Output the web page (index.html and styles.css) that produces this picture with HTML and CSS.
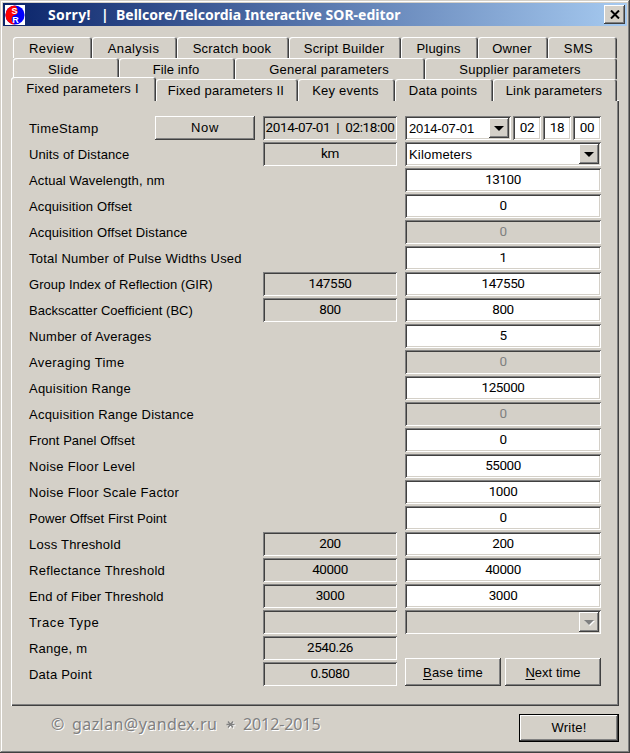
FILE: index.html
```
<!DOCTYPE html>
<html lang="en">
<head>
<meta charset="utf-8">
<title>Sorry! | Bellcore/Telcordia Interactive SOR-editor</title>
<link rel="stylesheet" href="styles.css">
</head>
<body>
<div class="window">
  <header class="titlebar">
    <svg class="app-icon" width="20" height="20" viewBox="0 0 20 20">
      <rect width="20" height="20" fill="#fff"/>
      <circle cx="10" cy="10" r="9.6" fill="#00f"/>
      <path d="M10 .4A9.6 9.6 0 0 0 10 19.6C5.500 16 6 11 10 10S13 3 10 .4Z" fill="#f00"/>
      <text x="9.500" y="8.500" class="icon-letter">S</text>
      <text x="10.500" y="18" class="icon-letter">R</text>
    </svg>
    <h1 class="title"><span class="app">Sorry!</span><span class="bar">|</span><span>Bellcore/Telcordia Interactive SOR-editor</span></h1>
    <button class="btn close"><svg width="10" height="9" viewBox="0 0 10 9"><path d="M1 .5 9 8.500M9 .5 1 8.500" stroke="#000" stroke-width="2"/></svg></button>
  </header>

  <nav class="tabs">
    <div class="tab-row row1">
      <div class="tab k3">Review</div><div class="tab k3">Analysis</div><div class="tab">Scratch book</div><div class="tab">Script Builder</div><div class="tab">Plugins</div><div class="tab">Owner</div><div class="tab sms k3">SMS</div>
    </div>
    <div class="tab-row row2">
      <div class="tab k3">Slide</div><div class="tab k1">File info</div><div class="tab">General parameters</div><div class="tab">Supplier parameters</div>
    </div>
    <div class="tab-row row3">
      <div class="tab selected">Fixed parameters I</div><div class="tab">Fixed parameters II</div><div class="tab">Key events</div><div class="tab">Data points</div><div class="tab">Link parameters</div>
    </div>
  </nav>

  <main class="panel">
    <div class="row"><label class="k3">TimeStamp</label><button class="btn now k6">Now</button><div class="field ro stamp">2014-07-01&nbsp; |&nbsp; 02:18:00</div>
      <div class="group"><div class="field combo date"><span>2014-07-01</span><i class="btn drop"></i></div><div class="field">02</div><div class="field">18</div><div class="field">00</div></div></div>
    <div class="row"><label class="k1">Units of Distance</label><div class="field ro">km</div><div class="field combo"><span>Kilometers</span><i class="btn drop"></i></div></div>
    <div class="row"><label class="k1">Actual Wavelength, nm</label><div class="field edit">13100</div></div>
    <div class="row"><label class="k1">Acquisition Offset</label><div class="field edit">0</div></div>
    <div class="row"><label class="k1">Acquisition Offset Distance</label><div class="field edit off">0</div></div>
    <div class="row"><label>Total Number of Pulse Widths Used</label><div class="field edit">1</div></div>
    <div class="row"><label class="k0">Group Index of Reflection (GIR)</label><div class="field ro">147550</div><div class="field edit">147550</div></div>
    <div class="row"><label class="k0">Backscatter Coefficient (BC)</label><div class="field ro">800</div><div class="field edit">800</div></div>
    <div class="row"><label>Number of Averages</label><div class="field edit">5</div></div>
    <div class="row"><label class="k3">Averaging Time</label><div class="field edit off">0</div></div>
    <div class="row"><label>Aquisition Range</label><div class="field edit">125000</div></div>
    <div class="row"><label>Acquisition Range Distance</label><div class="field edit off">0</div></div>
    <div class="row"><label class="k0">Front Panel Offset</label><div class="field edit">0</div></div>
    <div class="row"><label class="k2">Noise Floor Level</label><div class="field edit">55000</div></div>
    <div class="row"><label class="k2">Noise Floor Scale Factor</label><div class="field edit">1000</div></div>
    <div class="row"><label class="k0">Power Offset First Point</label><div class="field edit">0</div></div>
    <div class="row"><label>Loss Threshold</label><div class="field ro">200</div><div class="field edit">200</div></div>
    <div class="row"><label class="k2">Reflectance Threshold</label><div class="field ro">40000</div><div class="field edit">40000</div></div>
    <div class="row"><label class="k1">End of Fiber Threshold</label><div class="field ro">3000</div><div class="field edit">3000</div></div>
    <div class="row"><label class="k6">Trace Type</label><div class="field ro"></div><div class="field combo off"><span></span><i class="btn drop"></i></div></div>
    <div class="row"><label>Range, m</label><div class="field ro">2540.26</div></div>
    <div class="row"><label>Data Point</label><div class="field ro">0.5080</div>
      <div class="actions"><button class="btn"><span><u>B</u>ase time</span></button><button class="btn k0"><span><u>N</u>ext time</span></button></div></div>
  </main>

  <footer class="footer">
    <p class="credit"><span>©</span><span class="mail">gazlan@yandex.ru</span><svg class="star" width="10" height="10" viewBox="0 0 10 10"><path class="shade" d="M1.500 5.500H9.500M3 2.500 8 8.500M8 2.500 3 8.500"/><path d="M.5 4.500H8.500M2 1.500 7 7.500M7 1.500 2 7.500"/></svg><span>2012-2015</span></p>
    <button class="btn write">Write!</button>
  </footer>
</div>
</body>
</html>
```
FILE: styles.css
```
* { box-sizing: border-box; }
body {
  margin: 0;
  background: #d4d0c8;
  color: #000;
  font: 13px/15px "Liberation Sans", Arial, sans-serif;
  letter-spacing: .23px;
}
.k0 { letter-spacing: .03px; }
.k1 { letter-spacing: .12px; }
.k2 { letter-spacing: .3px; }
.k3 { letter-spacing: .4px; }
.k6 { letter-spacing: .6px; }

.window {
  width: 630px;
  height: 753px;
  padding: 3px;
  background: #d4d0c8;
  box-shadow: inset -1px -1px #404040, inset 1px 1px #d4d0c8, inset -2px -2px #808080, inset 2px 2px #fff;
}

/* Title bar */
.titlebar {
  display: flex;
  align-items: center;
  height: 23px;
  padding: 0 2px;
  background: linear-gradient(90deg, #0a246a, #a6caf0);
}
.app-icon { flex: none; }
.icon-letter { fill: #fff; font: bold 9px/9px "Liberation Sans", sans-serif; letter-spacing: 0; text-anchor: middle; }
.title {
  display: flex;
  flex: 1;
  margin: 0 0 0 23px;
  color: #fff;
  font: bold 14px/20px "Noto Sans", sans-serif;
  letter-spacing: 0;
  white-space: nowrap;
}
.app { width: 53px; letter-spacing: .3px; }
.bar { width: 15px; }

/* Raised buttons */
.btn {
  display: flex;
  align-items: center;
  justify-content: center;
  padding: 0;
  border: 0;
  background: #d4d0c8;
  color: #000;
  font: inherit;
  box-shadow: inset -1px -1px #404040, inset 1px 1px #fff, inset -2px -2px #808080;
}
button.btn:not([class*="k"]) { letter-spacing: .25px; }
.close { width: 21px; height: 19px; }
u { text-underline-offset: 2px; }

/* Tabs */
.tabs { margin: 11px 10px 0; }
.tab-row { display: grid; height: 21px; }
.row1 { grid-template-columns: 79px 85px 112px 112px 77px 70px 69px; }
.row2 { grid-template-columns: 106px 116px 190px 192px; }
.row3 { grid-template-columns: 143px 142px 97px 98px 124px; }
.tab {
  padding: 4px 2px 0 0;
  border-radius: 3px 3px 0 0;
  background: #d4d0c8;
  box-shadow: inset 1px 1px #fff, inset -1px 0 #404040, inset -2px 0 #808080;
  text-align: center;
  white-space: nowrap;
}
.row2 .tab:first-child { padding-right: 5px; }
.sms { padding-right: 8px; }
.selected {
  position: relative;
  height: 24px;
  margin: -2px 0 0 -2px;
}

/* Parameter sheet */
.panel {
  display: flex;
  flex-direction: column;
  gap: 2px;
  height: 606px;
  margin: 0 8px;
  padding: 16px 17px 0 18px;
  box-shadow: inset 1px 1px #fff, inset -1px -1px #404040, inset -2px -2px #808080;
}
.row {
  display: grid;
  grid-template-columns: 126px 100px 8px 134px 8px 196px;
  height: 24px;
}
.row > label { grid-column: 1 / 3; grid-row: 1; padding-top: 5px; white-space: nowrap; }
.now { grid-column: 2; grid-row: 1; z-index: 1; padding-bottom: 2px; }
.row > .ro { grid-column: 4; grid-row: 1; }
.row > .edit, .row > .combo, .group, .actions { grid-column: 6; grid-row: 1; }
.field {
  height: 24px;
  padding-top: 4px;
  background: #fff;
  font: 13.5px/15px Roboto, "Liberation Sans", sans-serif;
  letter-spacing: -.45px;
  text-align: center;
  white-space: nowrap;
  box-shadow: inset 1px 1px #808080, inset -1px -1px #fff, inset 2px 2px #404040, inset -2px -2px #d4d0c8;
}
.ro, .off { background: #d4d0c8; }
.off { color: #808080; }
.stamp { letter-spacing: -.35px; }
.group { display: grid; grid-template-columns: 106px 28px 28px 28px; gap: 2px; }
.combo {
  display: flex;
  justify-content: space-between;
  padding: 2px 2px 2px 4px;
  font: 13px/15px "Liberation Sans", Arial, sans-serif;
  letter-spacing: .18px;
}
.combo span { padding-top: 3px; }
.date { letter-spacing: -.15px; }
.drop { width: 20px; height: 20px; }
.drop::before {
  content: "";
  border: 5px solid transparent;
  border-top-color: #000;
  border-bottom: 0;
}
.off .drop::before { border-top-color: #808080; filter: drop-shadow(1px 1px #fff); }
.actions { display: grid; grid-template-columns: 96px 96px; gap: 4px; height: 28px; margin-top: -4px; }

/* Footer */
.footer { display: flex; justify-content: space-between; padding: 8px 8px 0 48px; }
.credit {
  display: flex;
  margin: 0;
  color: #808080;
  font: 16px/20px "Noto Sans", sans-serif;
  letter-spacing: -.1px;
  text-shadow: 1px 1px #fff;
}
.credit > span:first-child { width: 13px; }
.mail { width: 154px; margin-left: 8px; letter-spacing: .42px; }
.star { margin: 6px 7px 0 0; fill: none; stroke: #808080; stroke-width: 1.3; }
.shade { stroke: #fff; }
.write {
  width: 100px;
  height: 28px;
  padding-bottom: 2px;
  border: 1px solid #000;
}
```
